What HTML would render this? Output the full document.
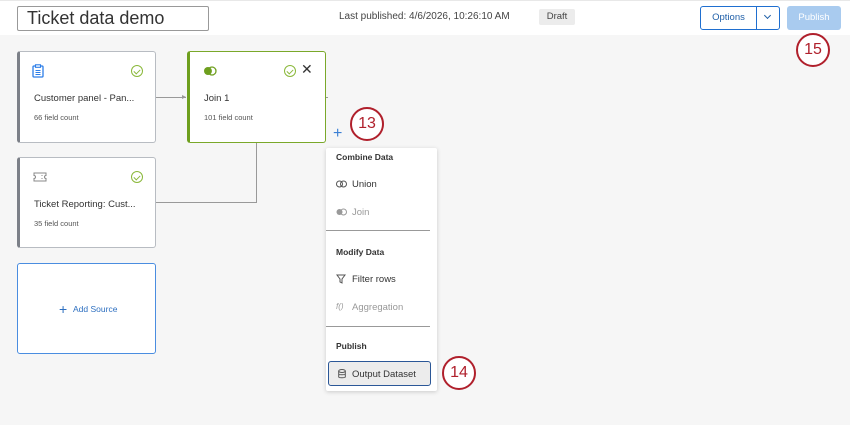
<!DOCTYPE html>
<html><head><style>
*{box-sizing:border-box;margin:0;padding:0}
body{width:850px;height:425px;background:#f6f6f6;font-family:"Liberation Sans",sans-serif;position:relative;overflow:hidden;color:#333}
.hdr{position:absolute;left:0;top:0;width:850px;height:35px;background:#fff;border-top:1px solid #e8e8e8}
.abs{position:absolute}
.card{position:absolute;background:#fff;border:1px solid #b8bcc2;border-left:3px solid #7c8088;border-radius:3px}
.card .t{position:absolute;left:14px;top:41px;font-size:9.5px;color:#333}
.card .f{position:absolute;left:14px;top:61px;font-size:7.5px;color:#555}
.chk{position:absolute;width:12px;height:12px;border:1.5px solid #8ab83a;border-radius:50%}
.chk:after{content:"";position:absolute;left:3px;top:1.5px;width:3px;height:5px;border:solid #8ab83a;border-width:0 1.3px 1.3px 0;transform:rotate(45deg)}
.circ{position:absolute;width:34px;height:34px;border:2px solid #b0202c;border-radius:50%;background:#fff;color:#b0202c;font-size:16px;text-align:center;line-height:30px}
.menu{position:absolute;left:326px;top:148px;width:111px;height:243px;background:#fff;box-shadow:0 1px 4px rgba(0,0,0,.18);border-radius:2px;font-size:9.5px}
.menu .h{position:absolute;left:10px;font-weight:bold;font-size:8.5px;color:#333}
.menu .i{position:absolute;left:26px;color:#333}
.menu .d{color:#999}
.menu .sep{position:absolute;left:0;width:104px;height:1px;background:#999}
</style></head><body>
<div class="hdr"></div>
<div class="abs" style="left:17px;top:6px;width:192px;height:25px;border:1px solid #999;border-radius:2px;font-size:18px;padding-left:9px;line-height:22px;color:#333">Ticket data demo</div>
<div class="abs" style="left:339px;top:11px;font-size:10px;color:#444">Last published: 4/6/2026, 10:26:10 AM</div>
<div class="abs" style="left:539px;top:9px;width:36px;height:16px;background:#ececec;font-size:9.5px;text-align:center;line-height:16px;color:#444;border-radius:2px">Draft</div>
<div class="abs" style="left:700px;top:6px;width:80px;height:24px;border:1px solid #1f6fd0;border-radius:3px;background:#fff"></div>
<div class="abs" style="left:700px;top:12px;width:57px;text-align:center;font-size:9.5px;color:#1f5fa8">Options</div>
<div class="abs" style="left:756px;top:6px;width:1px;height:24px;background:#1f6fd0"></div>
<div class="abs" style="left:765px;top:13px;width:5px;height:5px;border:solid #1f5fa8;border-width:0 1.3px 1.3px 0;transform:rotate(45deg)"></div>
<div class="abs" style="left:787px;top:6px;width:54px;height:24px;background:#a9cbef;border-radius:3px;color:#fff;font-size:9.5px;text-align:center;line-height:24px">Publish</div>
<div class="circ" style="left:796px;top:33px">15</div>

<div class="abs" style="left:155px;top:97px;width:31px;height:1px;background:#999"></div>
<div class="abs" style="left:182px;top:95px;border-left:4px solid #999;border-top:2.5px solid transparent;border-bottom:2.5px solid transparent"></div>
<div class="abs" style="left:155px;top:202px;width:102px;height:1px;background:#999"></div>
<div class="abs" style="left:256px;top:143px;width:1px;height:60px;background:#999"></div>
<div class="abs" style="left:325px;top:97px;width:3px;height:1px;background:#999"></div>

<div class="card" style="left:17px;top:51px;width:139px;height:92px">
 <svg class="abs" style="left:12px;top:12px" width="12" height="14" viewBox="0 0 12 14"><rect x="1" y="2" width="10" height="11" rx="1" fill="none" stroke="#2d7ee8" stroke-width="1.3"/><rect x="3.5" y="0.8" width="5" height="2.5" fill="#fff" stroke="#2d7ee8" stroke-width="1.1"/><path d="M3.5 6.5h5M3.5 8.5h5M3.5 10.5h5" stroke="#2d7ee8" stroke-width="1"/></svg>
 <div class="chk" style="left:111px;top:13px"></div>
 <div class="t">Customer panel - Pan...</div><div class="f">66 field count</div>
</div>
<div class="card" style="left:187px;top:51px;width:139px;height:92px;border:1px solid #7aa82a;border-left:3px solid #6e9f1e">
 <svg class="abs" style="left:13px;top:14px" width="14" height="10" viewBox="0 0 14 10"><circle cx="5" cy="5" r="4" fill="#6e9f1e"/><circle cx="9" cy="5" r="4" fill="#fff" stroke="#6e9f1e" stroke-width="1.3"/><path d="M7 1.6a4 4 0 0 1 0 6.8a4 4 0 0 1 0-6.8z" fill="#6e9f1e"/></svg>
 <div class="chk" style="left:94px;top:13px"></div>
 <div class="abs" style="left:111px;top:9px;font-size:14px;color:#333">✕</div>
 <div class="t">Join 1</div><div class="f">101 field count</div>
</div>
<div class="card" style="left:17px;top:157px;width:139px;height:91px">
 <svg class="abs" style="left:13px;top:14px" width="14" height="10" viewBox="0 0 14 10"><path d="M1 1h12v2.5a1.5 1.5 0 0 0 0 3V9H1V6.5a1.5 1.5 0 0 0 0-3z" fill="none" stroke="#888" stroke-width="1"/><path d="M9 3v1M9 6v1" stroke="#888"/></svg>
 <div class="chk" style="left:111px;top:13px"></div>
 <div class="t">Ticket Reporting: Cust...</div><div class="f">35 field count</div>
</div>
<div class="abs" style="left:17px;top:263px;width:139px;height:91px;background:#fff;border:1px solid #4a8de0;border-radius:3px"></div>
<div class="abs" style="left:59px;top:302px;font-size:14px;color:#2d6fc0;line-height:14px">+</div>
<div class="abs" style="left:73px;top:304px;font-size:8.5px;color:#2d6fc0">Add Source</div>

<div class="abs" style="left:333px;top:126px;font-size:16px;color:#3b7fd4;line-height:16px">+</div>
<div class="circ" style="left:350px;top:107px">13</div>

<div class="menu">
 <div class="h" style="top:4px">Combine Data</div>
 <svg class="abs" style="left:10px;top:32px" width="11" height="8"><circle cx="3.5" cy="4" r="3" fill="none" stroke="#555"/><circle cx="7.5" cy="4" r="3" fill="none" stroke="#555"/></svg>
 <div class="i" style="top:31px">Union</div>
 <svg class="abs" style="left:10px;top:60px" width="11" height="8"><circle cx="3.5" cy="4" r="3" fill="#999"/><circle cx="7.5" cy="4" r="3" fill="none" stroke="#999"/></svg>
 <div class="i d" style="top:59px">Join</div>
 <div class="sep" style="top:82px"></div>
 <div class="h" style="top:99px">Modify Data</div>
 <svg class="abs" style="left:10px;top:126px" width="10" height="10"><path d="M1 1h8L6 5v4L4 8V5z" fill="none" stroke="#555"/></svg>
 <div class="i" style="top:126px">Filter rows</div>
 <div class="abs" style="left:10px;top:154px;font-size:8px;color:#999;font-style:italic">f()</div>
 <div class="i d" style="top:154px">Aggregation</div>
 <div class="sep" style="top:178px"></div>
 <div class="h" style="top:193px">Publish</div>
 <div class="abs" style="left:2px;top:213px;width:103px;height:25px;border:1.5px solid #2b5797;border-radius:3px;background:#ececec"></div>
 <svg class="abs" style="left:12px;top:221px" width="8" height="10"><ellipse cx="4" cy="2" rx="3.3" ry="1.5" fill="none" stroke="#555"/><path d="M.7 2v6c0 1 6.6 1 6.6 0V2M.7 5c0 1 6.6 1 6.6 0" fill="none" stroke="#555"/></svg>
 <div class="i" style="top:221px">Output Dataset</div>
</div>
<div class="circ" style="left:442px;top:356px">14</div>
</body></html>
